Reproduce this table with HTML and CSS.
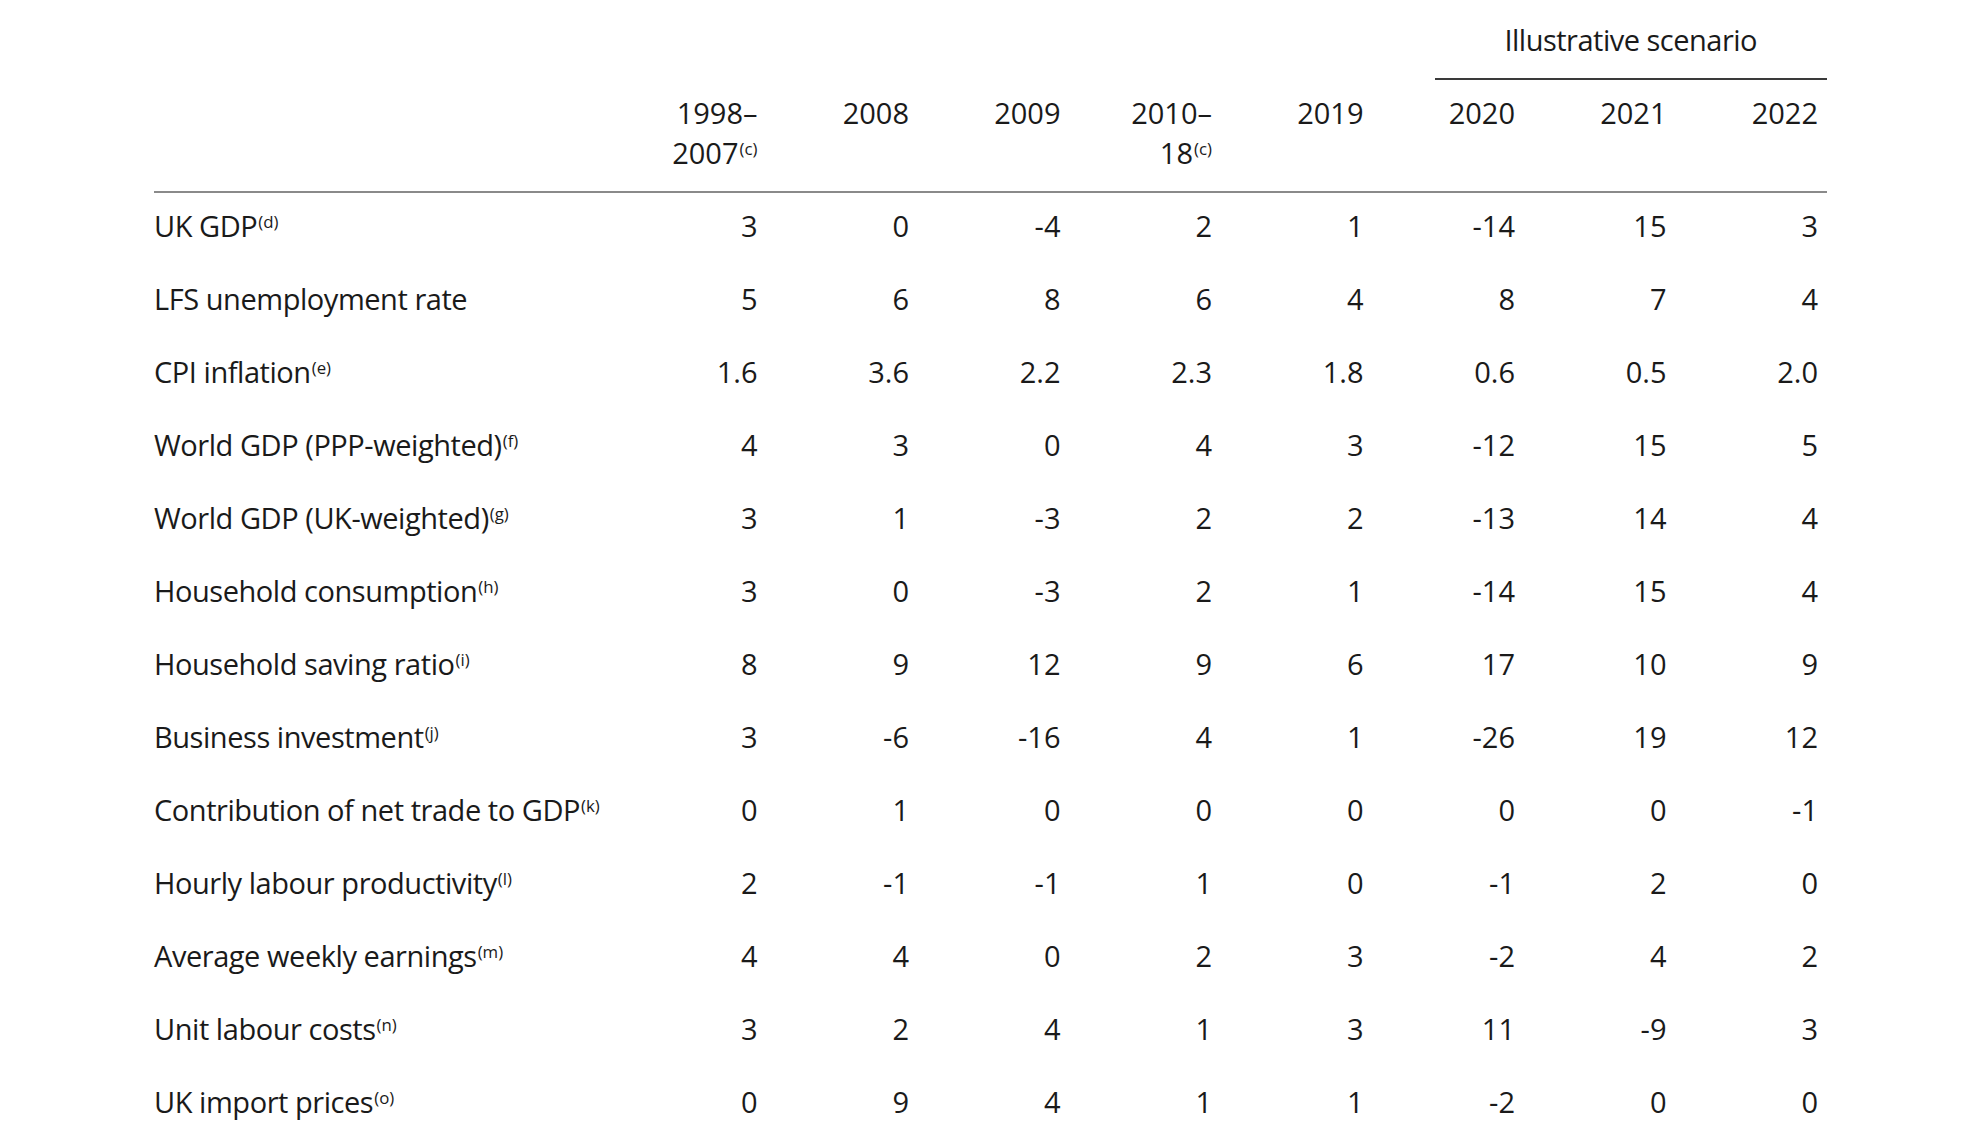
FILE: index.html
```html
<!DOCTYPE html>
<html lang="en">
<head>
<meta charset="utf-8">
<title>Illustrative scenario</title>
<link rel="stylesheet" href="styles.css">
</head>
<body>
<table class="proj">
  <colgroup>
    <col class="c-label">
    <col class="c-num"><col class="c-num"><col class="c-num"><col class="c-num">
    <col class="c-num"><col class="c-num"><col class="c-num"><col class="c-num">
  </colgroup>
  <thead>
    <tr class="group-row">
      <th colspan="6"></th>
      <th colspan="3" class="group"><div class="group-label">Illustrative scenario</div></th>
    </tr>
    <tr class="year-row">
      <th></th>
      <th>1998–<br>2007<sup>(c)</sup></th>
      <th>2008</th>
      <th>2009</th>
      <th>2010–<br>18<sup>(c)</sup></th>
      <th>2019</th>
      <th>2020</th>
      <th>2021</th>
      <th>2022</th>
    </tr>
  </thead>
  <tbody>
    <tr><td>UK GDP<sup>(d)</sup></td><td>3</td><td>0</td><td>-4</td><td>2</td><td>1</td><td>-14</td><td>15</td><td>3</td></tr>
    <tr><td>LFS unemployment rate</td><td>5</td><td>6</td><td>8</td><td>6</td><td>4</td><td>8</td><td>7</td><td>4</td></tr>
    <tr><td>CPI inflation<sup>(e)</sup></td><td>1.6</td><td>3.6</td><td>2.2</td><td>2.3</td><td>1.8</td><td>0.6</td><td>0.5</td><td>2.0</td></tr>
    <tr><td>World GDP (PPP-weighted)<sup>(f)</sup></td><td>4</td><td>3</td><td>0</td><td>4</td><td>3</td><td>-12</td><td>15</td><td>5</td></tr>
    <tr><td>World GDP (UK-weighted)<sup>(g)</sup></td><td>3</td><td>1</td><td>-3</td><td>2</td><td>2</td><td>-13</td><td>14</td><td>4</td></tr>
    <tr><td>Household consumption<sup>(h)</sup></td><td>3</td><td>0</td><td>-3</td><td>2</td><td>1</td><td>-14</td><td>15</td><td>4</td></tr>
    <tr><td>Household saving ratio<sup>(i)</sup></td><td>8</td><td>9</td><td>12</td><td>9</td><td>6</td><td>17</td><td>10</td><td>9</td></tr>
    <tr><td>Business investment<sup>(j)</sup></td><td>3</td><td>-6</td><td>-16</td><td>4</td><td>1</td><td>-26</td><td>19</td><td>12</td></tr>
    <tr><td>Contribution of net trade to GDP<sup>(k)</sup></td><td>0</td><td>1</td><td>0</td><td>0</td><td>0</td><td>0</td><td>0</td><td>-1</td></tr>
    <tr><td>Hourly labour productivity<sup>(l)</sup></td><td>2</td><td>-1</td><td>-1</td><td>1</td><td>0</td><td>-1</td><td>2</td><td>0</td></tr>
    <tr><td>Average weekly earnings<sup>(m)</sup></td><td>4</td><td>4</td><td>0</td><td>2</td><td>3</td><td>-2</td><td>4</td><td>2</td></tr>
    <tr><td>Unit labour costs<sup>(n)</sup></td><td>3</td><td>2</td><td>4</td><td>1</td><td>3</td><td>11</td><td>-9</td><td>3</td></tr>
    <tr><td>UK import prices<sup>(o)</sup></td><td>0</td><td>9</td><td>4</td><td>1</td><td>1</td><td>-2</td><td>0</td><td>0</td></tr>
  </tbody>
</table>
</body>
</html>
```
FILE: styles.css
```css
html, body {
  margin: 0;
  padding: 0;
  background: #ffffff;
}

body {
  padding-left: 154px;
  padding-top: 1px;
  font-family: "Open Sans", "Noto Sans", "Liberation Sans", sans-serif;
  color: #1a1a1a;
  font-size: 29px;
}

.proj {
  border-collapse: collapse;
  table-layout: fixed;
  width: 1673px;
}

.c-label { width: 461px; }
.c-num { width: 151.5px; }

.proj th,
.proj td {
  padding: 0;
  font-weight: normal;
  line-height: 40px;
}

.group-row th {
  height: 79px;
  vertical-align: bottom;
}

.group {
  text-align: center;
}

.group-label {
  margin-left: 62px;
  height: 79px;
  box-sizing: border-box;
  padding-top: 19px;
  line-height: 40px;
  letter-spacing: -0.5px;
  border-bottom: 2px solid #3a3a3a;
}

.year-row th {
  height: 112px;
  box-sizing: border-box;
  vertical-align: top;
  padding-top: 13px;
  text-align: right;
  padding-right: 9px;
  border-bottom: 2px solid #8a8a8a;
}

.proj td {
  height: 73px;
  box-sizing: border-box;
  padding-top: 13px;
  padding-bottom: 20px;
  vertical-align: top;
  text-align: right;
  padding-right: 9px;
}

.proj td:first-child {
  text-align: left;
  padding-right: 0;
  letter-spacing: -0.45px;
}

sup {
  font-size: 0.58em;
  line-height: 0;
  vertical-align: 0.55em;
  margin-left: 1px;
  letter-spacing: 0;
}
```
